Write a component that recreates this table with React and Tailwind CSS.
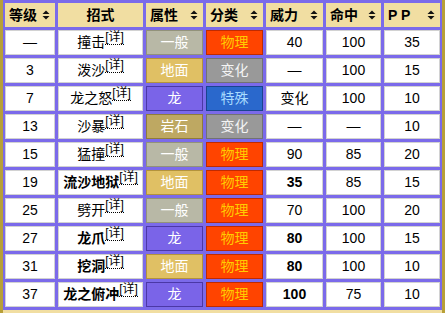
import React from "react";

const TYPES = {
  一般: "bg-[#b8b8a6] border-[#92927a] text-white",
  地面: "bg-[#e0c064] border-[#b3933c] text-white",
  龙: "bg-[#7a64e8] border-[#4b38a6] text-white",
  岩石: "bg-[#bea862] border-[#8f7c3a] text-white",
};

const CATS = {
  物理: "bg-[#ff4400] border-[#c02a00] text-[#ffcc00]",
  变化: "bg-[#999999] border-[#727272] text-[#f4f4f4]",
  特殊: "bg-[#2a68cc] border-[#1a448e] text-[#a8dcff]",
};

const moves = [
  { lv: "—", name: "撞击", type: "一般", cat: "物理", pow: "40", acc: "100", pp: "35" },
  { lv: "3", name: "泼沙", type: "地面", cat: "变化", pow: "—", acc: "100", pp: "15" },
  { lv: "7", name: "龙之怒", type: "龙", cat: "特殊", pow: "变化", acc: "100", pp: "10" },
  { lv: "13", name: "沙暴", type: "岩石", cat: "变化", pow: "—", acc: "—", pp: "10" },
  { lv: "15", name: "猛撞", type: "一般", cat: "物理", pow: "90", acc: "85", pp: "20" },
  { lv: "19", name: "流沙地狱", type: "地面", cat: "物理", pow: "35", acc: "85", pp: "15", stab: true },
  { lv: "25", name: "劈开", type: "一般", cat: "物理", pow: "70", acc: "100", pp: "20" },
  { lv: "27", name: "龙爪", type: "龙", cat: "物理", pow: "80", acc: "100", pp: "15", stab: true },
  { lv: "31", name: "挖洞", type: "地面", cat: "物理", pow: "80", acc: "100", pp: "10", stab: true },
  { lv: "37", name: "龙之俯冲", type: "龙", cat: "物理", pow: "100", acc: "75", pp: "10", stab: true },
];

function SortArrow() {
  return (
    <svg width="8" height="10" viewBox="0 0 8 10" className="shrink-0">
      <path d="M4 0.5 L7.5 4 L0.5 4 Z" fill="#111" />
      <path d="M0.5 6 L7.5 6 L4 9.5 Z" fill="#111" />
    </svg>
  );
}

function Head({ label, sort = true }) {
  return (
    <div className={`h-[24px] bg-[#f1dea2] flex items-center font-bold text-[14px] text-black ${sort ? "justify-between pl-[4px] pr-[5px]" : "justify-center"}`}>
      <span>{label}</span>
      {sort && <SortArrow />}
    </div>
  );
}

function Cell({ children, bold }) {
  return (
    <div className={`h-[25px] bg-white border border-[#d2d2d2] flex items-center justify-center text-[14px] text-black ${bold ? "font-bold" : ""}`}>
      {children}
    </div>
  );
}

function Badge({ label, cls }) {
  return (
    <div className={`h-[25px] border flex items-center justify-center text-[14px] ${cls}`}>
      {label}
    </div>
  );
}

export default function App() {
  return (
    <div
      className="w-[445px] h-[313px] overflow-hidden bg-[#b8a038] px-[3px]"
      style={{ fontFamily: '"Liberation Sans", "Noto Sans CJK SC", sans-serif' }}
    >
      <div className="bg-[#7b6aea] pt-[3px] pb-[3px] px-[2px]">
        <div className="grid grid-cols-[50px_85px_57px_57px_57px_55px_56px] gap-[3px]">
          <Head label="等级" />
          <Head label="招式" sort={false} />
          <Head label="属性" />
          <Head label="分类" />
          <Head label="威力" />
          <Head label="命中" />
          <Head label="P P" />
          {moves.map((m) => (
            <React.Fragment key={m.name}>
              <Cell>{m.lv}</Cell>
              <Cell bold={m.stab}>
                <span>{m.name}</span>
                <span className="text-[12px] font-normal relative -top-[5px] border-b border-dotted border-black leading-[13px]">[详]</span>
              </Cell>
              <Badge label={m.type} cls={TYPES[m.type]} />
              <Badge label={m.cat} cls={CATS[m.cat]} />
              <Cell bold={m.stab}>{m.pow}</Cell>
              <Cell>{m.acc}</Cell>
              <Cell>{m.pp}</Cell>
            </React.Fragment>
          ))}
        </div>
      </div>
      <div className="h-[3px] bg-[#f1dea2]" />
    </div>
  );
}
